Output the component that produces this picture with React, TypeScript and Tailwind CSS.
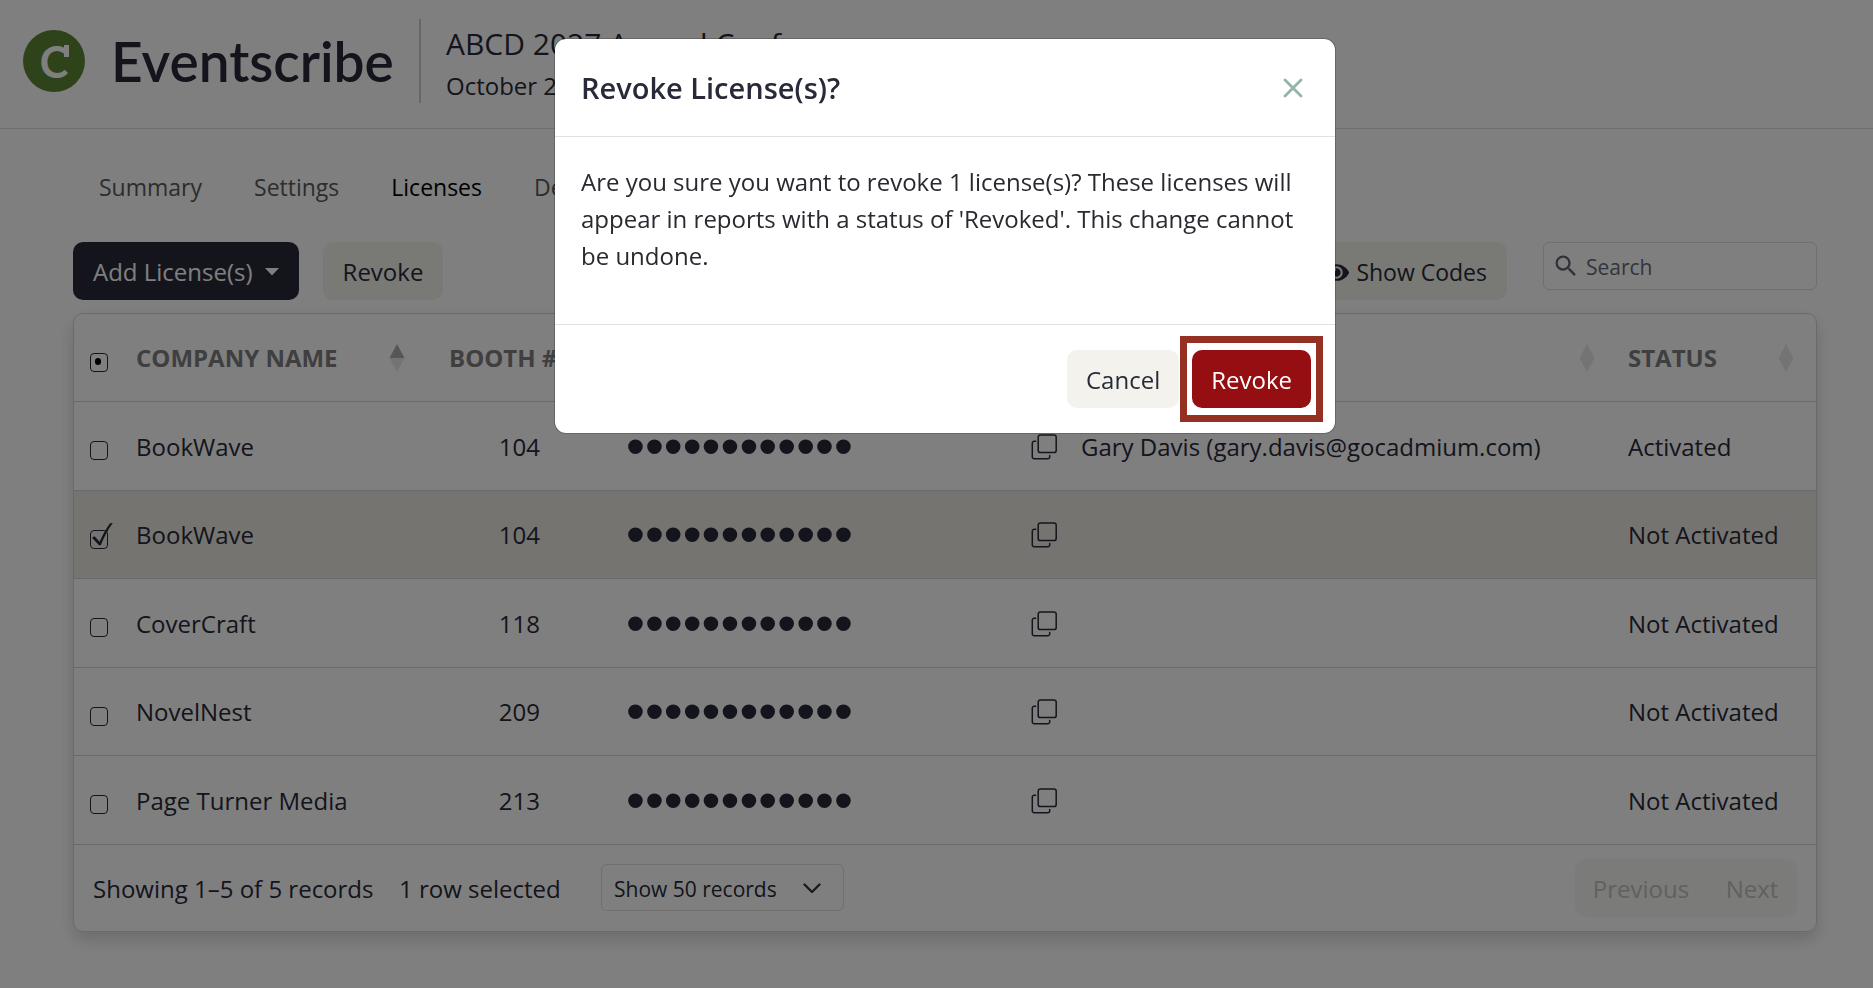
import clsx from "clsx";
import { FaEye } from "react-icons/fa";
import { MdSearch } from "react-icons/md";

const tabs = ["Summary", "Settings", "Licenses", "Details"];

const licenses = [
  { id: 1, company: "BookWave", booth: 104, assignee: "Gary Davis (gary.davis@gocadmium.com)", status: "Activated", selected: false },
  { id: 2, company: "BookWave", booth: 104, assignee: "", status: "Not Activated", selected: true },
  { id: 3, company: "CoverCraft", booth: 118, assignee: "", status: "Not Activated", selected: false },
  { id: 4, company: "NovelNest", booth: 209, assignee: "", status: "Not Activated", selected: false },
  { id: 5, company: "Page Turner Media", booth: 213, assignee: "", status: "Not Activated", selected: false },
];

function SortIcon({ active = false }: { active?: boolean }) {
  return (
    <svg width="16" height="28" viewBox="0 0 16 28" aria-hidden="true" className="shrink-0">
      <path d="M8 0 15.5 14H.5Z" fill={active ? "#acacac" : "#e8e8e8"} />
      <path d="M8 28 .5 14h15Z" fill="#e8e8e8" />
    </svg>
  );
}

function CopyIcon() {
  return (
    <svg width="26" height="26" viewBox="0 0 26 26" fill="none" stroke="#282a38" strokeWidth="1.5" strokeLinecap="round">
      <rect x="7.2" y="1" width="18" height="17.6" rx="2.2" />
      <path d="M4.6 7.2H3.4A2 2 0 0 0 1.3 9.3v13.4a2 2 0 0 0 2.1 2.1h13.2a2 2 0 0 0 2.1-2.1v-1.2" />
    </svg>
  );
}

function RowCheckbox({ label, checked = false, mixed = false }: { label: string; checked?: boolean; mixed?: boolean }) {
  return (
    <span className="relative mt-2.5 block h-[19px] w-[18px]">
      <input
        type="checkbox"
        aria-label={label}
        defaultChecked={checked}
        className="block h-[19px] w-[18px] appearance-none rounded border border-[#282a38]"
      />
      {checked && (
        <svg width="24" height="26" viewBox="0 0 24 26" className="pointer-events-none absolute -top-2 left-0">
          <path d="M2 15.8 4.6 14.2 9.6 19.8C12.6 13 16.4 6 20 1.2L22.8 1C18 7.4 14 15 10.8 23.2H9Z" fill="#282a38" />
        </svg>
      )}
      {mixed && <span className="pointer-events-none absolute top-[5px] left-[5px] h-[7px] w-[6px] rounded-full bg-black" />}
    </span>
  );
}

function Header() {
  return (
    <header className="flex h-[129px] items-start border-b border-[#dedede] pt-[19px] pl-[23px]">
      <div className="flex h-[84px] items-center">
        <div className="relative flex size-[62px] items-center justify-center rounded-full bg-[#5e8634] font-['Lato',sans-serif] text-[43px] leading-none font-bold text-white">
          C
          <span className="absolute top-[15px] left-[41px] h-3 w-[5px] bg-white" />
        </div>
        <span className="ml-[26px] w-[281px] font-['Lato',sans-serif] text-[55px] leading-none font-semibold">Eventscribe</span>
      </div>
      <div className="ml-[27px] h-[84px] border-l-2 border-[#ccc] pl-[25px]">
        <p className="text-[30px] leading-[50px]">ABCD 2027 Annual Conference</p>
        <p className="text-2xl leading-[34px]">October 2</p>
      </div>
    </header>
  );
}

function Toolbar() {
  return (
    <div className="flex items-start">
      <button className="flex h-[58px] items-center gap-3 rounded-[10px] bg-[#282a38] px-5 pt-0.5 text-white">
        Add License(s)
        <svg width="14" height="8" viewBox="0 0 14 8" aria-hidden="true">
          <path d="M0 0h14L7 7.5Z" fill="#fff" />
        </svg>
      </button>
      <button className="ml-6 h-[58px] rounded-[10px] bg-[#f3f2ec] px-5 pt-0.5">Revoke</button>
      <button className="ml-auto flex h-[58px] items-center gap-[7px] rounded-[10px] bg-[#f3f2ec] px-5 pt-0.5 text-[23px]">
        <FaEye className="text-[25px]" />
        Show Codes
      </button>
      <label className="ml-9 flex h-12 w-[274px] items-center gap-1.5 rounded-md border border-[#dfdfe2] pl-2">
        <MdSearch className="shrink-0 text-[28px] text-[#5f6373]" />
        <input
          type="search"
          aria-label="Search"
          placeholder="Search"
          className="min-w-0 flex-1 bg-transparent pt-0.5 text-[21px] outline-none placeholder:text-[#666b78]"
        />
      </label>
    </div>
  );
}

function LicenseTable() {
  return (
    <div className="mt-[13px] rounded-[10px] border border-[#d4d4dc] shadow-[0_8px_16px_rgba(0,0,0,0.15)]">
      <table className="w-full table-fixed text-left">
        <colgroup>
          <col className="w-[40px]" />
          <col className="w-[313px]" />
          <col className="w-[179px]" />
          <col className="w-[403px]" />
          <col className="w-[50px]" />
          <col />
          <col className="w-[210px]" />
        </colgroup>
        <thead>
          <tr className="h-[87px] border-b border-[#d4d4dc] text-[#7e7e7e] uppercase">
            <th className="pl-4">
              <RowCheckbox label="Select all rows" mixed />
            </th>
            <th className="px-[22px] pt-0.5">
              <div className="flex items-center justify-between whitespace-nowrap">
                Company Name
                <SortIcon active />
              </div>
            </th>
            <th className="px-[22px] pt-0.5 whitespace-nowrap">Booth #</th>
            <th aria-label="Code" />
            <th aria-label="Copy" />
            <th aria-label="User" className="pt-0.5 pr-[11px]">
              <div className="flex justify-end">
                <SortIcon />
              </div>
            </th>
            <th className="px-[22px] pt-0.5">
              <div className="flex items-center justify-between">
                Status
                <SortIcon />
              </div>
            </th>
          </tr>
        </thead>
        <tbody>
          {licenses.map((license) => (
            <tr
              key={license.id}
              className={clsx("border-b border-[#d4d4dc] odd:h-[89px] even:h-[88px]", license.selected && "bg-[#ebe9e0]")}
            >
              <td className="pl-4">
                <RowCheckbox label={`Select ${license.company}`} checked={license.selected} />
              </td>
              <td className="px-[22px] pt-0.5 whitespace-nowrap">{license.company}</td>
              <td className="pt-0.5 pr-[66px] text-right">{license.booth}</td>
              <td className="pl-5 font-['Liberation_Sans',sans-serif] text-[54px] leading-none">••••••••••••</td>
              <td className="pt-0.5 pl-[22px]">
                <button aria-label="Copy code" className="block">
                  <CopyIcon />
                </button>
              </td>
              <td className="pt-0.5 pl-[22px] whitespace-nowrap">{license.assignee}</td>
              <td className="pt-0.5 pl-[22px] whitespace-nowrap">{license.status}</td>
            </tr>
          ))}
        </tbody>
      </table>
      <div className="flex h-[86px] items-center px-[19px]">
        <span className="w-[306px] pt-0.5 whitespace-nowrap">Showing 1–5 of 5 records</span>
        <span className="w-[202px] pt-0.5 whitespace-nowrap">1 row selected</span>
        <div className="relative">
          <select
            aria-label="Records per page"
            className="h-[47px] w-[243px] appearance-none rounded-md border border-[#e0e0e0] bg-transparent pt-0.5 pl-3 text-[21px]"
          >
            <option>Show 50 records</option>
          </select>
          <svg
            width="18"
            height="11"
            viewBox="0 0 18 11"
            fill="none"
            stroke="#343a40"
            strokeWidth="2.4"
            strokeLinecap="round"
            strokeLinejoin="round"
            className="pointer-events-none absolute top-[19px] right-[23px]"
          >
            <path d="m1.5 1.5 7.5 7.5 7.5-7.5" />
          </svg>
        </div>
        <div className="ml-auto flex h-[58px] overflow-hidden rounded-[10px] bg-[#f7f7f2] text-[#c2c2c2]">
          <button disabled className="w-[132px] pt-0.5">
            Previous
          </button>
          <button disabled className="w-[90px] pt-0.5">
            Next
          </button>
        </div>
      </div>
    </div>
  );
}

function RevokeModal() {
  return (
    <div className="fixed inset-0 z-50 flex items-start justify-center bg-black/50 pt-[38px] pl-[17px]">
      <div
        role="dialog"
        aria-modal="true"
        aria-labelledby="revoke-title"
        className="w-full max-w-[782px] rounded-xl border border-black/20 bg-white bg-clip-padding"
      >
        <div className="flex h-[98px] items-center justify-between border-b border-[#dee2e6] pr-8 pl-[26px]">
          <h2 id="revoke-title" className="pt-0.5 text-[29px] font-semibold">
            Revoke License(s)?
          </h2>
          <button aria-label="Close">
            <svg width="20" height="20" viewBox="0 0 20 20" stroke="#93b5a7" strokeWidth="2.8" strokeLinecap="round">
              <path d="m2 2 16 16M18 2 2 18" />
            </svg>
          </button>
        </div>
        <p className="h-[187px] px-[26px] pt-[26px] leading-[37px] text-[#282a30]">
          Are you sure you want to revoke 1 license(s)? These licenses will appear in reports with a status of
          'Revoked'. This change cannot be undone.
        </p>
        <div className="flex h-[109px] items-center justify-end border-t border-[#dee2e6] pr-3">
          <button className="h-[58px] rounded-[10px] bg-[#f3f2ec] px-[19px] pt-0.5">Cancel</button>
          <div className="ml-px border-[7px] border-[#943122] px-[5px] py-[7px]">
            <button className="h-[58px] rounded-[10px] bg-[#940e12] px-[19px] pt-0.5 text-white">Revoke</button>
          </div>
        </div>
      </div>
    </div>
  );
}

export default function App() {
  return (
    <div className="min-h-screen bg-white font-['Open_Sans',sans-serif] text-2xl text-[#282a38]">
      <Header />
      <main className="pr-14 pl-[73px]">
        <nav className="flex h-[113px] gap-[52px] pt-[43px] pl-[26px] text-[23px]">
          {tabs.map((tab) => (
            <a
              key={tab}
              href={`#${tab.toLowerCase()}`}
              className={clsx("h-9", tab === "Licenses" ? "text-black" : "text-[#5a5a5a]")}
            >
              {tab}
            </a>
          ))}
        </nav>
        <Toolbar />
        <LicenseTable />
      </main>
      <RevokeModal />
    </div>
  );
}
